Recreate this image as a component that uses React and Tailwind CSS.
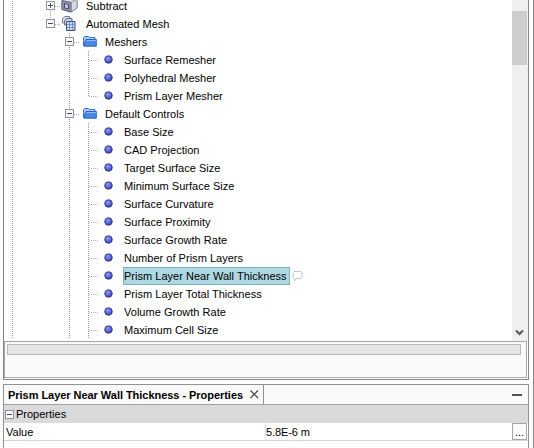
import React from "react";

const leaf = (label, last = false) => ({ kind: "leaf", label, last });
const rows = [
  { kind: "cube", label: "Subtract" },
  { kind: "mesh", label: "Automated Mesh" },
  { kind: "folder", label: "Meshers" },
  leaf("Surface Remesher"),
  leaf("Polyhedral Mesher"),
  leaf("Prism Layer Mesher", true),
  { kind: "folder", label: "Default Controls" },
  leaf("Base Size"),
  leaf("CAD Projection"),
  leaf("Target Surface Size"),
  leaf("Minimum Surface Size"),
  leaf("Surface Curvature"),
  leaf("Surface Proximity"),
  leaf("Surface Growth Rate"),
  leaf("Number of Prism Layers"),
  { kind: "leaf", label: "Prism Layer Near Wall Thickness", selected: true },
  leaf("Prism Layer Total Thickness"),
  leaf("Volume Growth Rate"),
  leaf("Maximum Cell Size"),
];

function Toggle({ plus }) {
  return (
    <svg width="9" height="9" viewBox="0 0 9 9" shapeRendering="crispEdges" className="block shrink-0">
      <rect x="0.5" y="0.5" width="8" height="8" fill="#f8f8fa" stroke="#92929c" />
      <path d={plus ? "M2 4.5h5M4.5 2v5" : "M2 4.5h5"} stroke="#4a4a78" fill="none" />
    </svg>
  );
}

/* One 19px indent column: optional trunk, branch and expander. */
function Guide({ line, branch, toggle }) {
  const end = line === "half" ? 9 : 18;
  return (
    <div className="relative h-[18px] w-[19px] shrink-0">
      <svg width="19" height="18" className="block" shapeRendering="crispEdges">
        {line && <path d={`M8.5 0V${end}`} stroke="#999" strokeDasharray="1 1" />}
        {branch && <path d="M9 9.5H18" stroke="#b0b0b0" strokeDasharray="1 1" />}
      </svg>
      {toggle && (
        <div className="absolute left-[4px] top-[4px]">
          <Toggle plus={toggle === "plus"} />
        </div>
      )}
    </div>
  );
}

function Cube() {
  return (
    <svg width="18" height="18" viewBox="0 0 18 18" className="block">
      <path d="M1 4.5 7 1l9 2v9l-6 4-9-2.5z" fill="#b9bdce" stroke="#666a80" />
      <path d="M1 4.5 7 1l9 2-6 3.5z" fill="#dfe1eb" stroke="#85899c" strokeWidth=".6" />
      <path d="M10 6.5 16 3v9l-6 4z" fill="#d8dae3" stroke="#85899c" strokeWidth=".7" />
      <path d="m1 4.5 9 2V16l-9-2.500z" fill="#8e93ae" stroke="#5a5f7a" strokeWidth=".8" />
      <path d="m3.500 7.500 4 1v4.500l-4-1z" fill="#c5cada" stroke="#454b67" />
    </svg>
  );
}

function MeshIcon() {
  return (
    <svg width="16" height="17" viewBox="0 0 16 17" className="block">
      <path d="M1.500 3.500 4 1.500h4.500v5L7 8H1.500z" fill="#dde0ea" stroke="#777c91" />
      <path d="M3.500 6 5.500 3.500h5.500v6.500H3.500z" fill="#ccd2e0" stroke="#626a84" />
      <path d="M5.500 6.500h8.500v9H5.500z" fill="#c5dcf0" stroke="#3f4f7c" />
      <path d="M8.500 7v8M11.500 7v8M6 9.500h8M6 12.500h8" stroke="#6a85b4" strokeWidth=".8" />
    </svg>
  );
}

function Folder() {
  return (
    <svg width="14" height="12" viewBox="0 0 14 12" className="block">
      <path d="M.5 10.500V2.500L1.500 1.500h4l1 1h5.500v2" fill="#a5caf8" stroke="#3874cc" />
      <path d="M.8 10.800 3 4.500h10.300v6.700H1z" fill="#4b88e6" stroke="#2458bd" strokeWidth=".9" />
      <path d="M3.500 5.500h9.300" stroke="#8dbdf9" />
    </svg>
  );
}

function Dot() {
  return (
    <svg width="9" height="9" viewBox="0 0 9 9" className="block">
      <defs>
        <radialGradient id="ball" cx=".42" cy=".35" r=".65">
          <stop offset="0" stopColor="#8f9cf0" />
          <stop offset=".65" stopColor="#5560d2" />
          <stop offset="1" stopColor="#3a3da6" />
        </radialGradient>
      </defs>
      <circle cx="4.5" cy="4.500" r="3.800" fill="url(#ball)" stroke="#303080" strokeWidth=".8" />
    </svg>
  );
}

function Row({ row, index }) {
  const { kind, label, selected, last } = row;
  const top = index < 2;
  return (
    <div className="flex h-[18px] shrink-0 items-center">
      <Guide line="full" />
      <Guide />
      {top ? (
        <Guide line={index === 0 ? "full" : "half"} branch toggle={index === 0 ? "plus" : "minus"} />
      ) : (
        <Guide />
      )}
      {!top && <Guide line="full" branch={kind === "folder"} toggle={kind === "folder" ? "minus" : null} />}
      {kind === "leaf" && <Guide line={last ? "half" : "full"} branch />}
      <div className="flex h-[18px] w-[24px] shrink-0 items-start">
        {kind === "cube" && <div className="-mt-px"><Cube /></div>}
        {kind === "mesh" && <div><MeshIcon /></div>}
        {kind === "folder" && <div className="pl-[3px] pt-[2px]"><Folder /></div>}
        {kind === "leaf" && <div className="pl-[5px] pt-[4px]"><Dot /></div>}
      </div>
      {selected ? (
        <>
          <div className="h-[18px] w-[167px] border border-[#79b2bd] bg-[#add8e2] leading-[17px]">{label}</div>
          <svg width="12" height="12" viewBox="0 0 12 12" className="ml-[2px] block">
            <path d="M2 1.500h7l1 1v5l-1 1h-4l-2.500 2v-2L1 7.500v-5z" fill="#fff" stroke="#b9bdd2" strokeWidth=".9" />
          </svg>
        </>
      ) : (
        <div className="pl-px leading-[18px]">{label}</div>
      )}
    </div>
  );
}

export default function App() {
  return (
    <div className="flex h-[448px] w-[534px] flex-col overflow-hidden border-r border-[#85858b] bg-[#fcfcfd] pl-[3px] font-['Liberation_Sans',Arial,sans-serif] text-[11px] text-black whitespace-nowrap">
      <div className="flex h-[380px] w-[526px] shrink-0 flex-col border-x border-b border-[#85858a] bg-white">
        <div className="flex h-[341px] shrink-0 overflow-hidden">
          <div className="-mt-[3px] flex flex-1 flex-col tracking-[0.020px]">
            {rows.map((row, i) => (
              <Row key={row.label} row={row} index={i} />
            ))}
          </div>
          <div className="flex h-[341px] w-[16px] shrink-0 flex-col bg-[#efefef]">
            <div className="mt-[11px] h-[54px] w-[15px] bg-[#cdcdcd]" />
            <div className="mt-auto mb-[4px] flex justify-center pr-px">
              <svg width="9" height="8" viewBox="0 0 9 8" className="block">
                <path d="m1 1.500 3.500 3.500L8 1.500" fill="none" stroke="#555" strokeWidth="2" />
              </svg>
            </div>
          </div>
        </div>
        <div className="h-[37px] w-[523px] shrink-0 border border-[#a6a6a8] bg-[#fafafa] pl-[2px] pt-[2px]">
          <div className="h-[11px] w-[514px] border border-[#b8b8b8] bg-[#e5e5e5]" />
        </div>
      </div>

      <div className="mt-[4px] h-[66px] w-[526px] shrink-0 border-x border-t border-[#929296] bg-white">
        <div className="flex h-[20px] items-center border-b border-[#a0a0a3] bg-[#fafafa]">
          <div className="flex h-[19px] w-[260px] items-center border-r border-[#929296] pl-[4px]">
            <span className="w-[236px] pt-px text-[11px] font-bold leading-[18px] tracking-[-0.040px]">Prism Layer Near Wall Thickness - Properties</span>
            <svg width="11" height="11" viewBox="0 0 11 11" className="ml-[5px] block">
              <path d="m1.500 1.500 7.500 7.500M9 1.500 1.500 9" stroke="#444" strokeWidth="1.200" />
            </svg>
          </div>
          <div className="ml-auto mr-[6px] h-[2px] w-[10px] bg-[#555]" />
        </div>
        <div className="flex h-[18px] items-center bg-[#dadada] pl-px">
          <Toggle />
          <span className="ml-[2px] leading-[18px]">Properties</span>
        </div>
        <div className="flex h-[18px] border-b border-[#d5d5d5]">
          <div className="w-[262px] border-r border-[#dedede] pl-[2px] leading-[18px]">Value</div>
          <div className="flex-1 leading-[18px] tracking-[-0.100px]">5.8E-6 m</div>
          <div className="mr-px flex h-[17px] w-[15px] items-center justify-center border border-[#a5a5a5] bg-[#fafafa] pt-[2px] leading-none">...</div>
        </div>
      </div>
    </div>
  );
}
